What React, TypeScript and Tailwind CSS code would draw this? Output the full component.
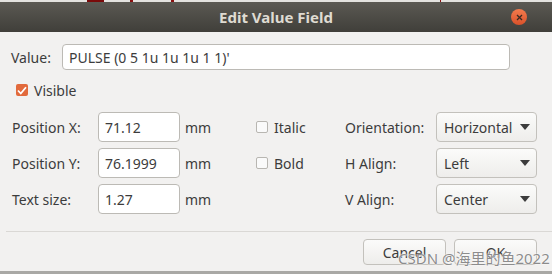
import React from 'react';

const font = { fontFamily: '"Noto Sans", "Open Sans", sans-serif' };

function Field({ value, className }: { value: string; className?: string }) {
  return (
    <div
      className={`flex items-center rounded-[4px] border border-[#bcbab5] bg-white px-[6px] text-[14px] text-[#3c3c3c] ${className ?? ''}`}
    >
      {value}
    </div>
  );
}

function Select({ value }: { value: string }) {
  return (
    <div className="flex h-[30px] w-[101px] items-center justify-between rounded-[4px] border border-[#c3c1bc] bg-gradient-to-b from-[#fbfbfa] to-[#eeedeb] pl-[7px] pr-[6px] text-[14px] text-[#3c3c3c]">
      <span>{value}</span>
      <svg width="10" height="6" viewBox="0 0 10 6">
        <path d="M0 0h10L5 6z" fill="#3c3c3c" />
      </svg>
    </div>
  );
}

function Check({ label, checked }: { label: string; checked?: boolean }) {
  return (
    <div className="flex h-[20px] items-center gap-[6px] text-[14px] text-[#3c3c3c]">
      {checked ? (
        <span className="flex h-[12px] w-[12px] items-center justify-center rounded-[2px] bg-[#e26a3c]">
          <svg width="10" height="9" viewBox="0 0 10 9">
            <path d="M1 4.5l2.8 3L9 1.2" stroke="#fff" strokeWidth="1.8" fill="none" />
          </svg>
        </span>
      ) : (
        <span className="h-[12px] w-[12px] rounded-[2px] border border-[#b8b6b1] bg-[#fafafa]" />
      )}
      <span>{label}</span>
    </div>
  );
}

export default function App() {
  const rows = [
    { label: 'Position X:', value: '71.12', check: 'Italic', right: 'Orientation:', sel: 'Horizontal' },
    { label: 'Position Y:', value: '76.1999', check: 'Bold', right: 'H Align:', sel: 'Left' },
    { label: 'Text size:', value: '1.27', check: '', right: 'V Align:', sel: 'Center' },
  ];

  return (
    <div className="relative h-[274px] w-[552px] overflow-hidden bg-[#d6d5d2]" style={font}>
      <div className="flex h-[2px] bg-[#e3e2df]">
        <div className="ml-[87px] h-[2px] w-[17px] bg-[#7a0a0a]" />
        <div className="ml-[26px] h-[2px] w-[3px] bg-[#8a1010]" />
        <div className="ml-[38px] h-[2px] w-[3px] bg-[#8a1010]" />
        <div className="ml-[266px] h-[2px] w-[1px] bg-[#8a1010]" />
      </div>

      <div className="relative flex h-[30px] items-center justify-center bg-gradient-to-b from-[#5b5953] to-[#403f3a]">
        <span className="text-[15px] font-bold text-[#dfdbd2]">Edit Value Field</span>
        <div className="absolute right-[25px] top-[7px] flex h-[16px] w-[16px] items-center justify-center rounded-full bg-gradient-to-b from-[#f37b4d] to-[#d9512a]">
          <svg width="7" height="7" viewBox="0 0 7 7">
            <path d="M1 1l5 5M6 1L1 6" stroke="#3a2a22" strokeWidth="1.3" />
          </svg>
        </div>
      </div>

      <div className="flex h-[239px] flex-col bg-[#f2f1f0]">
        <div className="mt-[12px] flex items-center">
          <span className="ml-[11px] w-[51px] text-[14px] text-[#3c3c3c]">Value:</span>
          <Field value="PULSE (0 5 1u 1u 1u 1 1)'" className="h-[26px] w-[448px]" />
        </div>

        <div className="ml-[16px] mt-[10px]">
          <Check label="Visible" checked />
        </div>

        <div className="mt-[12px] flex flex-col gap-[6px]">
          {rows.map((r) => (
            <div key={r.label} className="flex h-[30px] items-center text-[14px] text-[#3c3c3c]">
              <span className="ml-[12px] w-[86px]">{r.label}</span>
              <Field value={r.value} className="h-[30px] w-[82px]" />
              <span className="ml-[5px] w-[71px]">mm</span>
              <div className="w-[89px]">{r.check && <Check label={r.check} />}</div>
              <span className="w-[91px]">{r.right}</span>
              <Select value={r.sel} />
            </div>
          ))}
        </div>

        <div className="ml-[6px] mt-[17px] h-px bg-[#dad8d5]" />

        <div className="mt-[7px] flex justify-end gap-[8px] pr-[15px]">
          <button className="h-[26px] w-[83px] rounded-[4px] border border-[#c3c1bc] bg-gradient-to-b from-[#fbfbfa] to-[#eeedeb] text-[14px] text-[#3c3c3c]">
            Cancel
          </button>
          <button className="h-[26px] w-[83px] rounded-[4px] border border-[#c3c1bc] bg-gradient-to-b from-[#fbfbfa] to-[#eeedeb] text-[14px] text-[#3c3c3c]">
            OK
          </button>
        </div>
      </div>

      <div className="h-[3px] bg-[#a9a8a5]" />

      <span
        className="absolute left-[398px] top-[247px] text-[15px] text-[#8c8c8c] [text-shadow:0_0_2px_#fff,0_0_1px_#fff]"
        style={{ fontFamily: '"Noto Sans", "Noto Sans CJK SC", sans-serif' }}
      >
        CSDN @海里的鱼2022
      </span>
    </div>
  );
}
